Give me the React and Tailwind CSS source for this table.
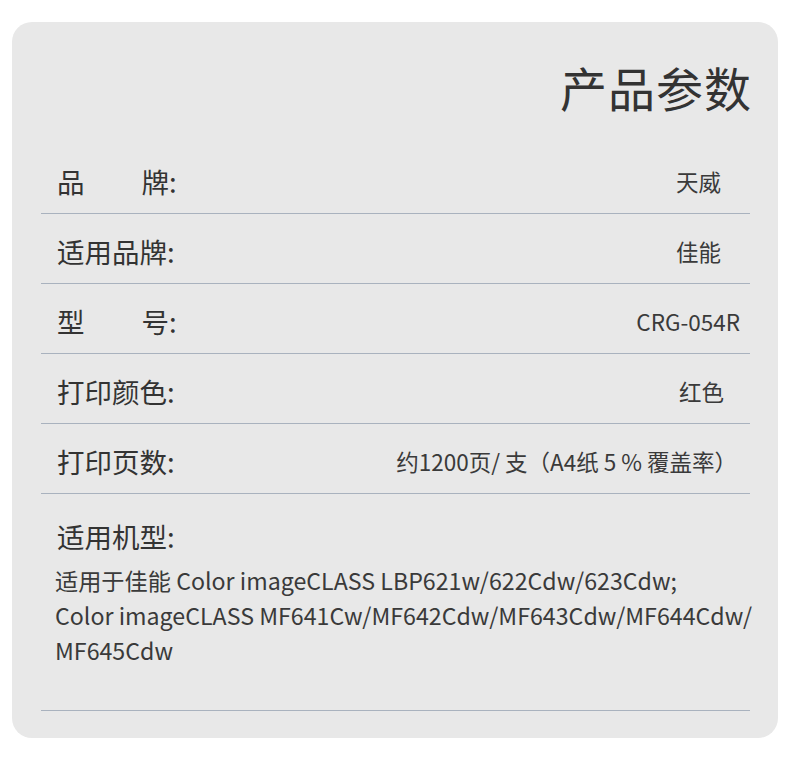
const FONT = { fontFamily: '"Noto Sans CJK SC", "Noto Sans", sans-serif' };

const ROWS = [
  { label: ['品', '牌'], value: '天威', pr: 'pr-[29px]' },
  { label: ['适用品牌'], value: '佳能', pr: 'pr-[29px]' },
  { label: ['型', '号'], value: 'CRG-054R', pr: 'pr-[10px]' },
  { label: ['打印颜色'], value: '红色', pr: 'pr-[26px]' },
  { label: ['打印页数'], value: '约1200页/ 支（A4纸 5 % 覆盖率）', pr: 'pr-[13px]' },
];

export default function App() {
  return (
    <div className="min-h-[760px] bg-white pt-[22px]" style={FONT}>
      <div className="mx-[12px] h-[716px] rounded-[20px] bg-[#e8e8e8] pl-[29px] pr-[28px]">
        <div className="flex h-[122px] items-center justify-end pt-[6px]">
          <h1 className="mr-[-2px] text-[47px] leading-none tracking-[1px] text-[#333]">产品参数</h1>
        </div>

        {ROWS.map((r) => (
          <div
            key={r.value}
            className={`flex h-[70px] items-center justify-between border-b border-[#a9b2be] pl-[16px] pt-[6px] ${r.pr}`}
          >
            <div className="flex items-center text-[27.5px] text-[#333]">
              {r.label.length === 2 ? (
                <span className="flex w-[112px] justify-between">
                  <span>{r.label[0]}</span>
                  <span>{r.label[1]}</span>
                </span>
              ) : (
                <span>{r.label[0]}</span>
              )}
              <span>:</span>
            </div>
            <span className="text-[22.5px] text-[#3a3a3a]">{r.value}</span>
          </div>
        ))}

        <div className="h-[217px] border-b border-[#a9b2be] pl-[14px] pt-[23px]">
          <div className="pl-[2px] text-[27.5px] leading-[38px] text-[#333]">适用机型:</div>
          <div className="mt-[8px] whitespace-nowrap text-[23.2px] leading-[35px] text-[#3a3a3a]">
            <div>适用于佳能 Color imageCLASS LBP621w/622Cdw/623Cdw;</div>
            <div>Color imageCLASS MF641Cw/MF642Cdw/MF643Cdw/MF644Cdw/</div>
            <div>MF645Cdw</div>
          </div>
        </div>
      </div>
    </div>
  );
}
